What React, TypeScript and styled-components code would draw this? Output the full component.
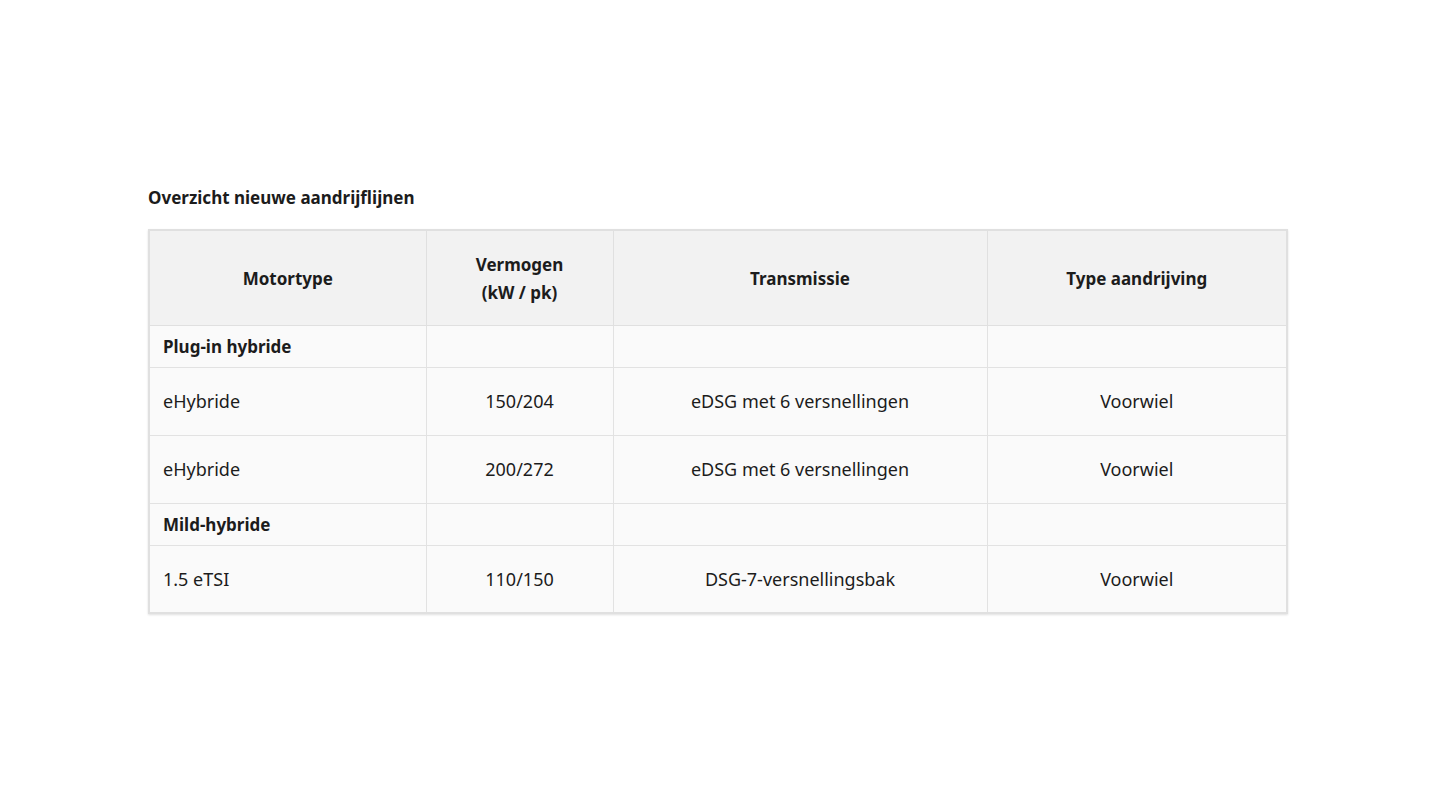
import React from "react";
import styled, { createGlobalStyle } from "styled-components";

const Global = createGlobalStyle`
  html, body { margin: 0; padding: 0; background: #ffffff; }
  body { font-family: "Noto Sans", "Open Sans", Arial, sans-serif; color: #1c1c1c; }
`;

const Page = styled.div`
  width: 1440px;
  height: 810px;
  box-sizing: border-box;
  padding: 187px 0 0 148px;
`;

const Title = styled.h3`
  margin: 0 0 20px 0;
  font-size: 17px;
  line-height: 22px;
  font-weight: 700;
  color: #1c1c1c;
`;

const Table = styled.table`
  width: 1138px;
  border-collapse: collapse;
  table-layout: fixed;
  border: 2px solid #e0e0e0;
  box-shadow: 0 1px 2px rgba(0, 0, 0, 0.12);
  font-size: 18px;
`;

const HeadCell = styled.th`
  background: #f2f2f2;
  border: 1px solid #e0e0e0;
  height: 95px;
  padding: 2px 13px 0;
  box-sizing: border-box;
  font-weight: 700;
  font-size: 17px;
  line-height: 28px;
  text-align: center;
  color: #1c1c1c;
`;

const Cell = styled.td<{ $align?: "left" | "center"; $group?: boolean }>`
  background: #fafafa;
  border: 1px solid #e2e2e2;
  height: ${(p) => (p.$group ? "42px" : "68px")};
  padding: 0 13px;
  box-sizing: border-box;
  text-align: ${(p) => p.$align ?? "center"};
  font-weight: ${(p) => (p.$group ? 700 : 400)};
  font-size: ${(p) => (p.$group ? "17px" : "18px")};
  color: #1c1c1c;
`;

type Row =
  | { group: string }
  | { motor: string; power: string; trans: string; drive: string };

const rows: Row[] = [
  { group: "Plug-in hybride" },
  { motor: "eHybride", power: "150/204", trans: "eDSG met 6 versnellingen", drive: "Voorwiel" },
  { motor: "eHybride", power: "200/272", trans: "eDSG met 6 versnellingen", drive: "Voorwiel" },
  { group: "Mild-hybride" },
  { motor: "1.5 eTSI", power: "110/150", trans: "DSG-7-versnellingsbak", drive: "Voorwiel" },
];

export default function App() {
  return (
    <>
      <Global />
      <Page>
        <Title>Overzicht nieuwe aandrijflijnen</Title>
        <Table>
          <colgroup>
            <col style={{ width: 277 }} />
            <col style={{ width: 187 }} />
            <col style={{ width: 374 }} />
            <col style={{ width: 300 }} />
          </colgroup>
          <thead>
            <tr>
              <HeadCell>Motortype</HeadCell>
              <HeadCell>
                Vermogen
                <br />
                (kW / pk)
              </HeadCell>
              <HeadCell>Transmissie</HeadCell>
              <HeadCell>Type aandrijving</HeadCell>
            </tr>
          </thead>
          <tbody>
            {rows.map((r, i) =>
              "group" in r ? (
                <tr key={i}>
                  <Cell $group $align="left">{r.group}</Cell>
                  <Cell $group />
                  <Cell $group />
                  <Cell $group />
                </tr>
              ) : (
                <tr key={i}>
                  <Cell $align="left">{r.motor}</Cell>
                  <Cell>{r.power}</Cell>
                  <Cell>{r.trans}</Cell>
                  <Cell>{r.drive}</Cell>
                </tr>
              )
            )}
          </tbody>
        </Table>
      </Page>
    </>
  );
}
